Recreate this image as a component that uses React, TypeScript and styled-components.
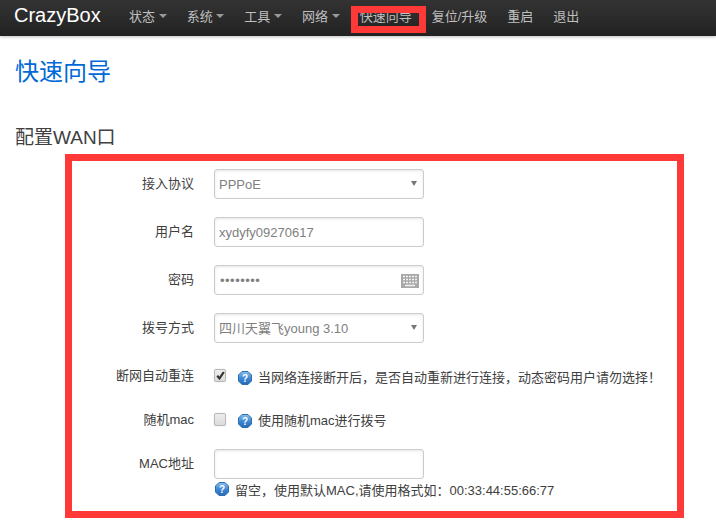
import React from 'react';
import styled, { createGlobalStyle } from 'styled-components';

const GlobalStyle = createGlobalStyle`
  html, body {
    margin: 0;
    padding: 0;
    background: #fff;
    overflow: hidden;
  }
  body {
    font-family: "Liberation Sans", "Noto Sans CJK SC", sans-serif;
    font-size: 13px;
    color: #404040;
  }
`;

const Page = styled.div`
  position: relative;
  width: 716px;
  height: 527px;
  overflow: hidden;
`;

const Navbar = styled.nav`
  display: flex;
  height: 36px;
  padding-left: 14px;
  background: linear-gradient(#333333, #222222);
  box-shadow: 0 1px 3px rgba(0, 0, 0, 0.25);
`;

const Brand = styled.a`
  width: 84px;
  margin-right: 21px;
  font-size: 20px;
  line-height: 30px;
  color: #fff;
`;

const NavItem = styled.a`
  display: flex;
  align-items: center;
  height: 30px;
  padding: 0 10px;
  color: #bfbfbf;
  font-size: 13px;
  white-space: nowrap;
`;

const Caret = styled.span`
  width: 0;
  height: 0;
  margin-left: 3.67px;
  margin-top: 1px;
  border-top: 4px solid #999;
  border-left: 4px solid transparent;
  border-right: 4px solid transparent;
`;

const Content = styled.main`
  padding: 0 16px;
`;

const Title = styled.h1`
  margin: 18px 0 0 -1px;
  font-size: 24px;
  font-weight: normal;
  line-height: 36px;
  color: #0069d6;
`;

const Section = styled.h2`
  margin: 30px 0 13px -1px;
  font-size: 19px;
  font-weight: normal;
  line-height: 36px;
  color: #404040;
`;

const Row = styled.div<{ $height?: number; $after?: number }>`
  display: grid;
  grid-template-columns: 178px 1fr;
  column-gap: 20px;
  align-items: start;
  height: ${(p) => p.$height ?? 30}px;
  margin-bottom: ${(p) => p.$after ?? 18}px;
`;

const Label = styled.label<{ $line?: number }>`
  text-align: right;
  line-height: ${(p) => p.$line ?? 30}px;
  color: #404040;
`;

const FieldBox = styled.div`
  position: relative;
  width: 210px;
  height: 30px;
`;

const fieldStyles = `
  box-sizing: border-box;
  width: 100%;
  height: 30px;
  padding: 0 5px 0 4px;
  border: 1px solid #ccc;
  border-radius: 3px;
  background: #fff;
  box-shadow: inset 0 1px 3px rgba(0, 0, 0, 0.1);
  font-family: "Liberation Sans", "Noto Sans CJK SC", sans-serif;
  font-size: 13px;
  color: #808080;
  outline: none;
`;

const TextInput = styled.input`
  ${fieldStyles}
`;

const PasswordInput = styled(TextInput)`
  padding-left: 5px;
  letter-spacing: 0.5px;
`;

const Select = styled.select`
  ${fieldStyles}
  appearance: none;
`;

const SelectArrow = styled.span`
  position: absolute;
  top: 12px;
  right: 7px;
  width: 0;
  height: 0;
  border-top: 5px solid #777;
  border-left: 3px solid transparent;
  border-right: 3px solid transparent;
  pointer-events: none;
`;

const KeyboardIcon = styled.svg`
  position: absolute;
  top: 9px;
  right: 5px;
`;

const CheckLine = styled.div`
  display: flex;
  align-items: flex-start;
  height: 100%;
`;

const CheckBox = styled.span<{ $top: number }>`
  box-sizing: border-box;
  display: flex;
  align-items: center;
  justify-content: center;
  width: 12px;
  height: 13px;
  margin-top: ${(p) => p.$top}px;
  margin-right: 12px;
  border: 1px solid #b8b8b8;
  border-radius: 2px;
  background: linear-gradient(#ececec, #dcdcdc);
  box-shadow: 0 0 1px rgba(0, 0, 0, 0.25);
`;

const HelpText = styled.span<{ $top: number }>`
  display: flex;
  align-items: center;
  margin-top: ${(p) => p.$top}px;
  line-height: 18px;
  white-space: nowrap;
  color: #404040;
`;

const HelpLine = styled.div`
  display: flex;
  align-items: center;
  height: 20px;
  margin-left: 199px;
  white-space: nowrap;
  color: #404040;
`;

const HelpBadge = styled.svg`
  flex: none;
  margin-right: 6px;
`;

const RedFrame = styled.div`
  position: absolute;
  box-sizing: border-box;
  left: 65px;
  top: 154px;
  width: 619px;
  height: 364px;
  border: 7px solid #ff3838;
  pointer-events: none;
`;

const RedNavFrame = styled.div`
  position: absolute;
  box-sizing: border-box;
  left: 351px;
  top: 6px;
  width: 75px;
  height: 27px;
  border: 7px solid #ff3838;
  pointer-events: none;
`;

const Help = () => (
  <HelpBadge width="14" height="14" viewBox="0 0 14 14">
    <defs>
      <linearGradient id="helpFill" x1="0" y1="0" x2="0" y2="1">
        <stop offset="0" stopColor="#8cc0ec" />
        <stop offset="0.5" stopColor="#3f8ad6" />
        <stop offset="1" stopColor="#2468b4" />
      </linearGradient>
    </defs>
    <path d="M4 .5h6L13.5 4v6L10 13.5H4L.5 10V4z" fill="url(#helpFill)" stroke="#2f6fae" />
    <text x="7" y="11" textAnchor="middle" fontSize="10" fontWeight="bold" fontFamily="Liberation Sans" fill="#fff">?</text>
  </HelpBadge>
);

const Keyboard = () => (
  <KeyboardIcon width="18" height="14" viewBox="0 0 18 14">
    <rect width="18" height="14" fill="#a8a8a8" />
    <path
      d="M2 2.5h2M5 2.5h2M8 2.5h2M11 2.5h2M14 2.5h2M2 5.5h2M5 5.5h2M8 5.5h2M11 5.5h2M14 5.5h2M2 8.5h2M5 8.5h2M8 8.5h2M11 8.5h2M14 8.5h2M4 11.5h10"
      stroke="#f2f2f2"
      strokeWidth="1.4"
    />
  </KeyboardIcon>
);

const menu = [
  { name: '状态', caret: true },
  { name: '系统', caret: true },
  { name: '工具', caret: true },
  { name: '网络', caret: true },
  { name: '快速向导' },
  { name: '复位/升级' },
  { name: '重启' },
  { name: '退出' },
];

const App: React.FC = () => (
  <Page>
    <GlobalStyle />
    <Navbar>
      <Brand>CrazyBox</Brand>
      {menu.map((item) => (
        <NavItem key={item.name}>
          {item.name}
          {item.caret && <Caret />}
        </NavItem>
      ))}
    </Navbar>
    <Content>
      <Title>快速向导</Title>
      <Section>配置WAN口</Section>
      <form>
        <Row>
          <Label>接入协议</Label>
          <FieldBox>
            <Select defaultValue="pppoe">
              <option value="pppoe">PPPoE</option>
            </Select>
            <SelectArrow />
          </FieldBox>
        </Row>
        <Row>
          <Label>用户名</Label>
          <FieldBox>
            <TextInput defaultValue="xydyfy09270617" />
          </FieldBox>
        </Row>
        <Row>
          <Label>密码</Label>
          <FieldBox>
            <PasswordInput type="password" defaultValue="12345678" />
            <Keyboard />
          </FieldBox>
        </Row>
        <Row>
          <Label>拨号方式</Label>
          <FieldBox>
            <Select defaultValue="sc">
              <option value="sc">四川天翼飞young 3.10</option>
            </Select>
            <SelectArrow />
          </FieldBox>
        </Row>
        <Row $height={27}>
          <Label $line={30}>断网自动重连</Label>
          <CheckLine>
            <CheckBox $top={8}>
              <svg width="9" height="9" viewBox="0 0 9 9">
                <path d="M1.2 4.8 3.5 7.4 7.8 1" fill="none" stroke="#333" strokeWidth="2.2" />
              </svg>
            </CheckBox>
            <HelpText $top={8}>
              <Help />
              当网络连接断开后，是否自动重新进行连接，动态密码用户请勿选择！
            </HelpText>
          </CheckLine>
        </Row>
        <Row $height={25}>
          <Label $line={28}>随机mac</Label>
          <CheckLine>
            <CheckBox $top={7} />
            <HelpText $top={6}>
              <Help />
              使用随机mac进行拨号
            </HelpText>
          </CheckLine>
        </Row>
        <Row $after={0}>
          <Label>MAC地址</Label>
          <FieldBox>
            <TextInput />
          </FieldBox>
        </Row>
        <HelpLine>
          <Help />
          留空，使用默认MAC,请使用格式如：00:33:44:55:66:77
        </HelpLine>
      </form>
    </Content>
    <RedNavFrame />
    <RedFrame />
  </Page>
);

export default App;
